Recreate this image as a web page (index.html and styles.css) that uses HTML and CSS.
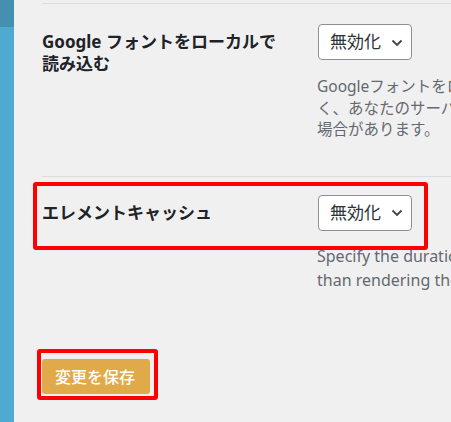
FILE: index.html
```html
<!DOCTYPE html>
<html lang="ja">
<head>
<meta charset="utf-8">
<title>Settings</title>
<link rel="stylesheet" href="styles.css">
</head>
<body>
<div class="layout">
  <aside class="sidebar"><div class="sidebar-top"></div></aside>
  <main class="main">
    <div class="sep sep-first"></div>
    <section class="row row-fonts">
      <div class="label">Google フォントをローカルで<br>読み込む</div>
      <div class="field">
        <div class="select"><span>無効化</span><svg class="chev" width="12" height="8" viewBox="0 0 12 8"><path d="M1.5 1.5 L6 6 L10.5 1.5" fill="none" stroke="#3c434a" stroke-width="1.8"/></svg></div>
        <p class="desc desc-ja"><span>Googleフォントをローカルで読み込むと、Googleのサーバーではな</span><span>く、あなたのサーバーから読み込まれます。GDPRの遵守に必要な</span><span>場合があります。</span></p>
      </div>
    </section>
    <div class="sep"></div>
    <section class="row row-cache">
      <div class="annot annot-row"></div>
      <div class="label label-cache">エレメントキャッシュ</div>
      <div class="field">
        <div class="select"><span>無効化</span><svg class="chev" width="12" height="8" viewBox="0 0 12 8"><path d="M1.5 1.5 L6 6 L10.5 1.5" fill="none" stroke="#3c434a" stroke-width="1.8"/></svg></div>
        <p class="desc desc-en"><span>Specify the duration for which data is stored in the cache. Elements caching speeds up loading by serving</span><span>than rendering them fresh each time.</span></p>
      </div>
    </section>
    <div class="submit">
      <button class="btn">変更を保存</button>
      <div class="annot annot-btn"></div>
    </div>
  </main>
</div>
</body>
</html>
```

FILE: styles.css
```css
html, body {
  margin: 0;
  padding: 0;
  overflow: hidden;
  background: #f0f0f1;
  font-family: "Noto Sans", "Noto Sans CJK JP", sans-serif;
}
.layout {
  display: flex;
  height: 422px;
}
.sidebar {
  width: 14px;
  flex: 0 0 14px;
  background: #4eaacf;
}
.sidebar-top {
  height: 27px;
  background: #4590b1;
}
.main {
  flex: 1;
  padding: 3px 0 0 28px;
  min-width: 0;
}
.sep {
  height: 1px;
  background: #dcdcde;
}
.row {
  display: grid;
  grid-template-columns: 276px 600px;
  position: relative;
}
.row-fonts {
  padding-top: 20px;
  padding-bottom: 35px;
}
.row-cache {
  padding-top: 18px;
}
.label {
  font-size: 17px;
  line-height: 22px;
  font-weight: 700;
  color: #1d2327;
  padding-top: 7px;
  white-space: nowrap;
}
.label-cache {
  padding-top: 7px;
}
.select {
  box-sizing: border-box;
  width: 94px;
  height: 36px;
  background: #fff;
  border: 1px solid #8c8f94;
  border-radius: 4px;
  display: flex;
  align-items: center;
  padding-left: 11px;
  gap: 10px;
  font-size: 17px;
  color: #2c3338;
}
.select span {
  line-height: 20px;
}
.chev {
  display: block;
  margin-top: 1px;
}
.desc {
  margin: 0;
  margin-left: -1px;
  color: #646970;
}
.desc span {
  display: block;
  white-space: nowrap;
}
.desc-ja {
  margin-top: 16px;
  font-size: 15.5px;
  line-height: 21.5px;
}
.desc-en {
  margin-top: 13px;
  font-size: 16px;
  line-height: 24px;
}
.annot {
  position: absolute;
  border: 4px solid #ff0000;
  border-radius: 3px;
  box-sizing: border-box;
  pointer-events: none;
}
.annot-row {
  left: -9px;
  top: 5px;
  width: 395px;
  height: 68px;
}
.submit {
  position: relative;
  margin-top: 67px;
  width: 108px;
}
.btn {
  display: block;
  box-sizing: border-box;
  width: 108px;
  height: 35px;
  border: 0;
  border-radius: 3px;
  background: #e0aa4a;
  color: #fff;
  font-family: "Noto Sans CJK JP", sans-serif;
  font-size: 16px;
  font-weight: 500;
  padding: 0 13px;
  text-align: left;
}
.annot-btn {
  left: -5px;
  top: -10px;
  width: 121px;
  height: 51px;
}
```
